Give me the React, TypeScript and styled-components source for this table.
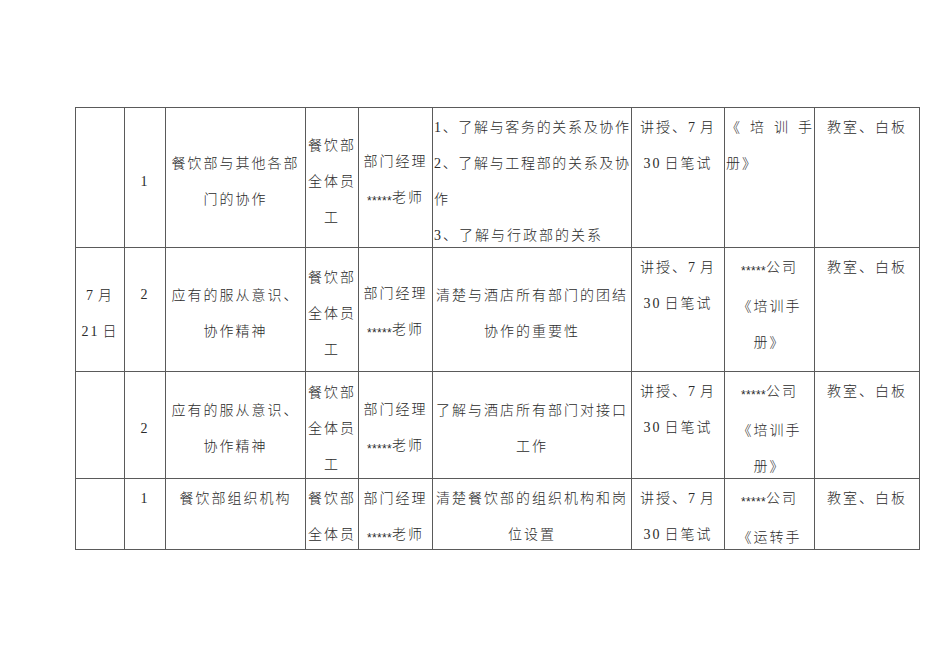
import React from 'react';
import styled, { createGlobalStyle } from 'styled-components';

const GlobalStyle = createGlobalStyle`
  html,
  body {
    margin: 0;
    background: #fff;
  }

  body {
    font-family: 'Liberation Serif', 'Noto Sans CJK SC', serif;
    font-weight: 300;
    color: #2b2b2b;
  }
`;

const Page = styled.div`
  box-sizing: border-box;
  width: 950px;
  height: 672px;
  padding: 107px 0 0 75px;
`;

// the table: grid lines come from the gap showing the dark background
const Sheet = styled.div`
  display: grid;
  grid-template-columns: 48px 40px 139px 52px 73px 198px 92px 89px 104px;
  grid-template-rows: 139px 123px 106px 70px;
  gap: 1px;
  padding: 1px;
  width: max-content;
  background: #5a5a5a;
`;

interface CellProps {
  $align?: 'left' | 'center';
  $v?: 'top' | 'middle';
  $lift?: number;
  $clip?: boolean;
}

const Cell = styled.div<CellProps>`
  display: flex;
  flex-direction: column;
  justify-content: ${(p) => (p.$v === 'top' ? 'flex-start' : 'center')};
  min-width: 0;
  padding: ${(p) => (p.$v === 'top' ? 2 : 8)}px 1px ${(p) => p.$lift ?? 0}px;
  background: #fff;
  font-size: 14px;
  line-height: 36px;
  letter-spacing: 2px;
  text-align: ${(p) => p.$align ?? 'center'};
  overflow: ${(p) => (p.$clip ? 'hidden' : 'visible')};
`;

// one printed line; a stretched one is spread to the full cell width
const Line = styled.div<{ $stretch?: boolean }>`
  white-space: nowrap;
  letter-spacing: ${(p) => (p.$stretch ? 1 : 2)}px;
  text-align: left;
  text-align-last: ${(p) => (p.$stretch ? 'justify' : 'auto')};
`;

const Num = styled.span`
  padding-right: 3px;
`;

const Stars = styled.span`
  font-family: 'Liberation Sans', sans-serif;
  font-size: 12px;
  letter-spacing: 0.3px;
  vertical-align: -3px;
`;

const Lead = () => (
  <>
    <div>部门经理</div>
    <div>
      <Stars>*****</Stars>老师
    </div>
  </>
);

const Method = () => (
  <>
    <div>
      讲授、<Num>7</Num>月
    </div>
    <div>
      <Num>30</Num>日笔试
    </div>
  </>
);

const Company = () => (
  <div>
    <Stars>*****</Stars>公司
  </div>
);

const App = () => (
  <Page>
    <GlobalStyle />
    <Sheet>
      {/* row 1 */}
      <Cell />
      <Cell>1</Cell>
      <Cell>餐饮部与其他各部门的协作</Cell>
      <Cell>餐饮部全体员工</Cell>
      <Cell>
        <Lead />
      </Cell>
      <Cell $v="top" $align="left">
        <Line $stretch>1、了解与客务的关系及协作</Line>
        <Line $stretch>2、了解与工程部的关系及协</Line>
        <Line>作</Line>
        <Line>3、了解与行政部的关系</Line>
      </Cell>
      <Cell $v="top">
        <Method />
      </Cell>
      <Cell $v="top" $align="left">
        <Line $stretch>《培训手</Line>
        <Line>册》</Line>
      </Cell>
      <Cell $v="top">教室、白板</Cell>

      {/* row 2 */}
      <Cell>
        <div>
          <Num>7</Num>月
        </div>
        <div>
          <Num>21</Num>日
        </div>
      </Cell>
      <Cell $lift={37}>2</Cell>
      <Cell>应有的服从意识、协作精神</Cell>
      <Cell>餐饮部全体员工</Cell>
      <Cell>
        <Lead />
      </Cell>
      <Cell>清楚与酒店所有部门的团结协作的重要性</Cell>
      <Cell $v="top">
        <Method />
      </Cell>
      <Cell $v="top">
        <Company />
        <div>《培训手</div>
        <div>册》</div>
      </Cell>
      <Cell $v="top">教室、白板</Cell>

      {/* row 3 */}
      <Cell />
      <Cell>2</Cell>
      <Cell>应有的服从意识、协作精神</Cell>
      <Cell>餐饮部全体员工</Cell>
      <Cell>
        <Lead />
      </Cell>
      <Cell>了解与酒店所有部门对接口工作</Cell>
      <Cell $v="top">
        <Method />
      </Cell>
      <Cell $v="top">
        <Company />
        <div>《培训手</div>
        <div>册》</div>
      </Cell>
      <Cell $v="top">教室、白板</Cell>

      {/* row 4, runs on past the page edge */}
      <Cell $v="top" $clip />
      <Cell $v="top" $clip>
        1
      </Cell>
      <Cell $v="top" $clip>
        餐饮部组织机构
      </Cell>
      <Cell $v="top" $clip>
        <div>餐饮部</div>
        <div>全体员</div>
      </Cell>
      <Cell $v="top" $clip>
        <Lead />
      </Cell>
      <Cell $v="top" $clip>
        清楚餐饮部的组织机构和岗位设置
      </Cell>
      <Cell $v="top" $clip>
        <Method />
      </Cell>
      <Cell $v="top" $clip>
        <Company />
        <div>《运转手</div>
      </Cell>
      <Cell $v="top" $clip>
        教室、白板
      </Cell>
    </Sheet>
  </Page>
);

export default App;
